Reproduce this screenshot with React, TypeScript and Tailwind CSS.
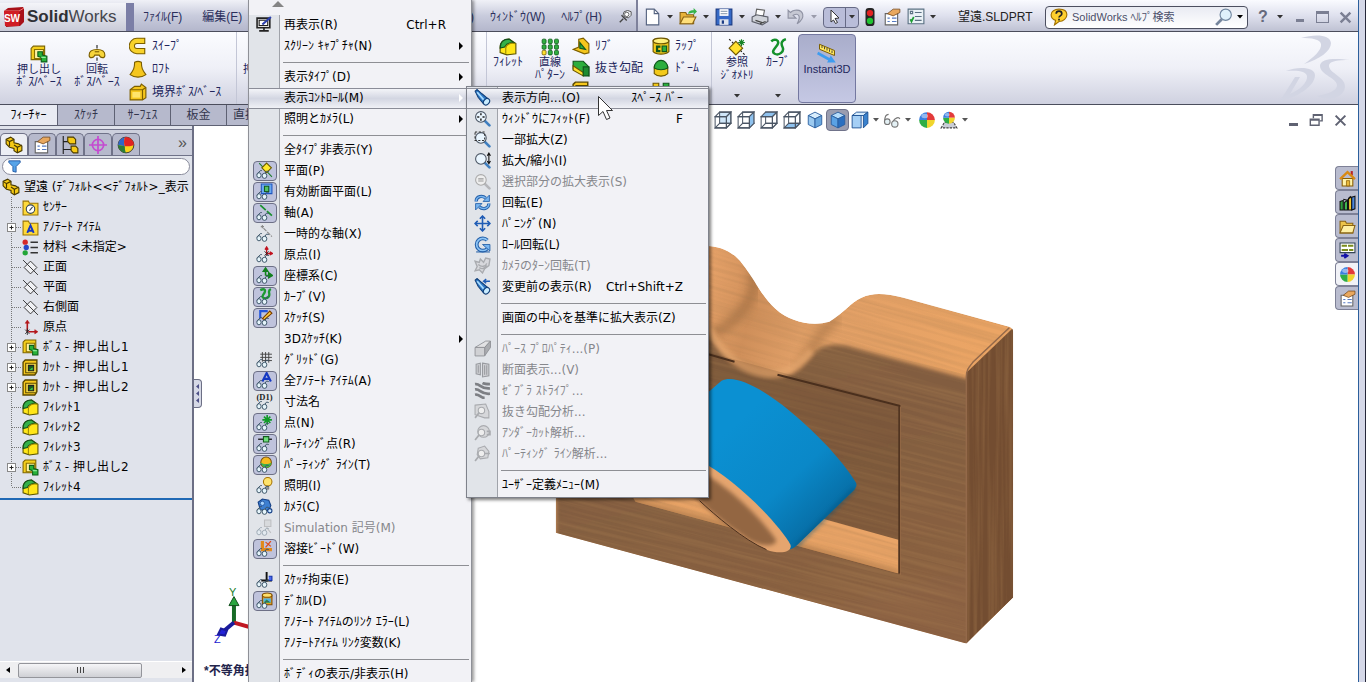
import type { ReactNode } from "react";

type IconProps = { children: ReactNode; className?: string };

function Icon({ children, className = "size-[18px]" }: IconProps) {
  return (
    <svg viewBox="0 0 16 16" className={"shrink-0 " + className} aria-hidden="true" fill="none">
      {children}
    </svg>
  );
}

function Caret({ className = "text-[#333]" }: { className?: string }) {
  return (
    <svg viewBox="0 0 6 4" className={"w-[6px] h-[4px] shrink-0 " + className} aria-hidden="true">
      <path d="M0 0h6L3 3.5z" fill="currentColor" />
    </svg>
  );
}

/* ---------- shared drawings ---------- */

const glasses = (
  <g stroke="#3c5568" strokeWidth="0.900" fill="#e6f5fb">
    <path d="M.8 11.500L4 8.200 5.500 8M8 11l2-2.500 2 .5" fill="none" />
    <ellipse cx="2.800" cy="12.500" rx="2" ry="2.400" />
    <ellipse cx="8" cy="13" rx="2.200" ry="2.400" />
  </g>
);

const extrudeIcon = (
  <>
    <path d="M1 3l2-2h10v9l-2 3H1z" fill="#f5cf1d" stroke="#7d6500" />
    <path d="M4 4h8v8H4z" fill="#fff2a0" stroke="#8a7000" />
    <path d="M7 6h4v3l4 1v5h-5v-4l-3-1z" fill="#28b33a" stroke="#0d5c1a" />
    <path d="M10 11h4" stroke="#9af0a5" />
  </>
);
const cutIcon = (
  <>
    <path d="M1 3l2-2h11v11l-2 3H1z" fill="#f8c81c" stroke="#5c4a00" strokeWidth="1.300" />
    <path d="M3.500 4h10v9h-10z" fill="#ffe34d" stroke="#5c4a00" />
    <path d="M6 6h5v5H6z" fill="#155c1e" stroke="#222" />
    <path d="M7 10h3V8z" fill="#48e05e" />
  </>
);
const filletIcon = (
  <>
    <path d="M1 8C1 3 5 1 9 1l6 4v9l-8 1-6-2z" fill="#ffe619" stroke="#5a5300" />
    <path d="M1 9C1 3 5 1 9 1l4 3C8 4 6 6 5 8z" fill="#35b148" stroke="#12501c" />
    <path d="M6 14V9c0-3 4-5 8.500-4" stroke="#a08c00" />
  </>
);
const planeIcon = (
  <g stroke="#333" strokeWidth="0.900">
    <path d="M8 2l6 6-6 6-6-6z" fill="#f0f1f5" />
    <path d="M1 1l14 14" />
  </g>
);
const partIcon = (
  <g fill="#f6ca16" stroke="#4a3b00">
    <path d="M1 3l4-2 3 2v3l4 1 3 2v4l-4 2-3-2v-2L4 10 1 7z" />
    <path d="M1 3l3 2 4-2M4 5v4M8 8l3 2 4-2M11 10v5" />
  </g>
);
const originIcon = (
  <g stroke="#b3161b" strokeWidth="1.500">
    <path d="M5 12V3M6 12h8" />
    <path d="M3 4l2-3 2 3zM12 10l3 2-3 2z" fill="#b3161b" strokeWidth="0.500" />
    <path d="M3 10l4 4M7 10l-4 4M5 9v6" stroke="#222" strokeWidth="0.800" />
  </g>
);
const handPage = (
  <>
    <path d="M2 5h11v10H2z" fill="#fff" stroke="#666" />
    <path d="M4 9h2M4 12h2M8 9h4M8 12h4" stroke="#567ac2" />
    <path d="M4 5l5-4h6v3l-6 3z" fill="#e9a85e" stroke="#75491c" strokeWidth="0.700" />
  </>
);
const ball = (
  <>
    <path d="M8 8V1a7 7 0 0 1 7 7z" fill="#e33a3a" />
    <path d="M8 8h7a7 7 0 0 1-7 7z" fill="#f0d52d" />
    <path d="M8 8v7a7 7 0 0 1-7-7z" fill="#2fae46" />
    <path d="M8 8H1a7 7 0 0 1 7-7z" fill="#3b7fe0" />
    <ellipse cx="6" cy="4.500" rx="3" ry="2" fill="#fff" opacity="0.450" />
  </>
);
const lens = (c: string, f: string, tip: string) => (
  <>
    <path d="M10 10l4.500 4.500" stroke={tip} strokeWidth="2.500" strokeLinecap="round" />
    <circle cx="6.500" cy="6.500" r="5" fill={f} stroke={c} strokeWidth="1" />
  </>
);
const telescope = (
  <g strokeLinejoin="round">
    <path d="M1 2l2-1.500 4.500 4 5.500 4.500-4 5-5-6z" fill="#2f7ac6" stroke="#123f78" />
    <path d="M3 3l6 7" stroke="#a9dcff" strokeWidth="1.600" />
    <ellipse cx="11.800" cy="12" rx="3.300" ry="2.500" fill="#c8ecff" stroke="#123f78" transform="rotate(-48 11.800 12)" />
  </g>
);

/* ---------- menu icons ---------- */

const view: Record<string, ReactNode> = {
  redraw: (
    <>
      <path d="M1 2h12v9H1z" fill="#ddd" stroke="#222" strokeWidth="1.500" />
      <path d="M3 4h8v5H3z" fill="#fff" stroke="#222" />
      <path d="M3 14h9M7.500 11v3" stroke="#222" strokeWidth="1.500" />
      <path d="M6 8l8-7" stroke="#2b3fae" strokeWidth="2" />
    </>
  ),
  plane: (
    <>
      <path d="M3 1l12 13" stroke="#1d7d2a" />
      <path d="M10 1l4.500 4.500L10 10 5.500 5.500z" fill="#ffe92b" stroke="#6b5c00" />
      {glasses}
    </>
  ),
  section: (
    <>
      <path d="M5 1h10v9H5z" fill="#69a8f0" stroke="#1f56c0" />
      <path d="M8 3h4v5H8z" fill="#53c367" stroke="#155c1e" />
      {glasses}
    </>
  ),
  axis: (
    <>
      <path d="M4 1l11 10" stroke="#1b9130" strokeWidth="1.600" strokeDasharray="7 1.500" />
      {glasses}
    </>
  ),
  tempAxis: (
    <>
      <path d="M6 0v3M4.500 1.500h3M7 3l8 8" stroke="#888" strokeDasharray="4 1" />
      {glasses}
    </>
  ),
  origin: (
    <>
      <path d="M10 9V2M10 7h5M8.500 3.500L10 1l1.500 2.500M13 5.500l2.500 1.500-2.500 1.500" stroke="#c1121f" strokeWidth="1.300" />
      <path d="M8 5l4 4M12 5L8 9" stroke="#222" strokeWidth="0.800" />
      {glasses}
    </>
  ),
  coord: (
    <>
      <path d="M9 8V2M9 8h5M7 4l2-3 2 3zM12 5.500L15.500 8 12 10z" stroke="#12801f" strokeWidth="1.500" fill="#1aa52c" />
      {glasses}
    </>
  ),
  curve: (
    <>
      <path d="M4 2c4-2 6 0 3 4s3 5 5 2-2-5 2-7" stroke="#1d9a32" strokeWidth="2.200" />
      {glasses}
    </>
  ),
  sketch: (
    <>
      <path d="M4 9V2h7" stroke="#2255dd" strokeWidth="2" />
      <path d="M6 9l7-7 2 2-7 6z" fill="#ffcf3c" stroke="#7a3c00" />
      {glasses}
    </>
  ),
  grid: (
    <>
      <path d="M4 3h11M4 6h11M6 9h9M6 1v9M9 1v10M12 1v10" stroke="#444" strokeWidth="0.900" />
      {glasses}
    </>
  ),
  anno: (
    <>
      <path d="M6 9l4-8 4 8M7.500 6.500h5" stroke="#1539c2" strokeWidth="2" />
      {glasses}
    </>
  ),
  dim: (
    <>
      <text x="8" y="7" fontSize="8" textAnchor="middle" fontFamily="Liberation Serif" fontWeight="bold" fill="#222">
        (D1)
      </text>
      {glasses}
    </>
  ),
  point: (
    <>
      <path d="M10.500 1v9M6 5.500h9M7.500 2.500l6 6M13.500 2.500l-6 6" stroke="#0f9b26" strokeWidth="1.500" />
      {glasses}
    </>
  ),
  route: (
    <>
      <path d="M2 4h13" stroke="#222" strokeWidth="1.300" />
      <path d="M7 1.500h5v5H7z" fill="#6fe07d" stroke="#145c1d" />
      {glasses}
    </>
  ),
  parting: (
    <>
      <circle cx="9.500" cy="6" r="5" fill="#f6ba1f" stroke="#79510a" />
      <path d="M4.500 6c3 2 7 2 10 0-.5 4-3 5-5 5s-4.500-2-5-5z" fill="#3fb348" />
      {glasses}
    </>
  ),
  light: (
    <>
      <circle cx="11" cy="4.500" r="4" fill="#ffe36b" stroke="#a87400" />
      <path d="M10 9h2v2.500h-2z" fill="#999" stroke="#555" strokeWidth="0.500" />
      {glasses}
    </>
  ),
  camera: (
    <>
      <path d="M2 4l4-3 6 1 2 5-2 5-8-1z" fill="#3d7fd0" stroke="#143f86" />
      <circle cx="6" cy="5" r="2" fill="#a5d4ff" stroke="#143f86" strokeWidth="0.600" />
      {glasses}
      <circle cx="13" cy="12" r="2" fill="#cbe8ff" stroke="#143f86" />
    </>
  ),
  sim: (
    <g opacity="0.400">
      <path d="M8 1h6v6H8zM10 8l4 5" stroke="#888" fill="#ccc" />
      {glasses}
    </g>
  ),
  weld: (
    <>
      <path d="M6 1v8h9" stroke="#e08a1c" strokeWidth="3" />
      <path d="M9 7l5-6M9 2l5 4" stroke="#e04c16" strokeWidth="1.200" />
      {glasses}
    </>
  ),
  relation: (
    <>
      <path d="M10 1v9M5 9h10" stroke="#111" strokeWidth="1.800" />
      <path d="M12 5h3v4h-3" fill="#4a69f0" stroke="#1331a8" />
      {glasses}
    </>
  ),
  decal: (
    <>
      <path d="M6 3v9h9V3z" fill="#e8a023" stroke="#804d00" />
      <ellipse cx="10.500" cy="3" rx="4.500" ry="2" fill="#ffe06b" stroke="#804d00" />
      <path d="M7 6h7v4H7z" fill="#4fb0e8" />
      <path d="M7 10l3-3 4 3z" fill="#2c9b40" />
      {glasses}
    </>
  ),
};

const sub: Record<string, ReactNode> = {
  orient: telescope,
  fit: (
    <>
      {lens("#4b5563", "#eaf6ff", "#3f7fc0")}
      <path d="M6.500 3v2M6.500 8v2M3 6.500h2M8 6.500h2" stroke="#222" strokeWidth="1.400" />
    </>
  ),
  area: (
    <>
      {lens("#4b5563", "#eaf6ff", "#3f7fc0")}
      <path d="M1 1h9v8H1z" stroke="#333" strokeDasharray="2 1.500" />
    </>
  ),
  zoom: (
    <>
      {lens("#4b5563", "#eaf6ff", "#3f7fc0")}
      <path d="M14 2v8M12.500 3.500L14 1l1.500 2.500M12.500 8.500L14 11l1.500-2.500" stroke="#111" />
    </>
  ),
  sel: (
    <>
      {lens("#aaa", "#eee", "#b5b6ba")}
      <path d="M4 5.500h5M4 7.500h5" stroke="#999" />
    </>
  ),
  rotate: (
    <g>
      <path d="M2 7c0-5 6-6 9-3M14 9c0 5-6 6-9 3" stroke="#245fa8" strokeWidth="3" />
      <path d="M2 7c0-5 6-6 9-3M14 9c0 5-6 6-9 3" stroke="#78b5f0" strokeWidth="1.400" />
      <path d="M14.500 1v6H8.500zM1.500 15V9h6z" fill="#78b5f0" stroke="#245fa8" strokeWidth="0.800" />
    </g>
  ),
  pan: (
    <g stroke="#1f5cb5" strokeWidth="1.500">
      <path d="M8 1.500v13M1.500 8h13" />
      <path d="M5.500 3.500L8 1l2.500 2.500M5.500 12.500L8 15l2.500-2.500M3.500 5.500L1 8l2.500 2.500M12.500 5.500L15 8l-2.500 2.500" />
    </g>
  ),
  roll: (
    <>
      <path d="M12.500 4a5.800 5.800 0 1 0 0 8" stroke="#245fa8" strokeWidth="3.600" />
      <path d="M12.500 4a5.800 5.800 0 1 0 0 8" stroke="#8cc4f5" strokeWidth="1.600" />
      <path d="M8 8h7v6z" fill="#78b5f0" stroke="#245fa8" strokeWidth="0.800" />
      <path d="M2 15h13" stroke="#245fa8" />
    </>
  ),
  turn: (
    <g stroke="#a9abaf" strokeWidth="1.300">
      <path d="M1 4l4 1 1-3 3 3 2-4 4 1-1 6-4 3-2 4-3-3-4 1 2-4z" fill="#d7d8dc" />
      <path d="M4 7c3 3 7 2 8-1M5 10c3 2 5 1 7-2" />
    </g>
  ),
  prev: (
    <>
      {telescope}
      <path d="M15 3H9M11.500 1L9 3l2.500 2" stroke="#1f5cb5" strokeWidth="1.300" />
    </>
  ),
  persp: (
    <g stroke="#8d8f93" strokeWidth="0.800">
      <path d="M1 7l10-6h4.500L10 7z" fill="#e2e2e4" />
      <path d="M10 7l5.500-6v6L10 15z" fill="#aaacb0" />
      <path d="M1 7h9v8H1z" fill="#d0d1d4" />
    </g>
  ),
  sect: (
    <g stroke="#999ba0">
      <path d="M2 3l4-1v11l-4-1zM8 2l6 1v11l-6 1z" fill="#cfd0d4" />
      <path d="M4 4v7M10 4v9M12 4v9" />
    </g>
  ),
  zebra: (
    <g stroke="#7d7f84" strokeWidth="2.600">
      <path d="M1 2c5-1 5 5 14 4M1 7c5-1 5 5 14 4M1 12c4-1 5 3 9 3M8 1c2 1 4 1 7 1" />
    </g>
  ),
  draft: (
    <g stroke="#a9abaf">
      <path d="M1 2l10-1 3 7v6h-4L1 11z" fill="#d6d7da" />
      <circle cx="7" cy="7" r="3" fill="#eee" />
      <path d="M5 9l-4 5" strokeWidth="1.600" />
    </g>
  ),
  under: (
    <g stroke="#a9abaf">
      <circle cx="9" cy="7" r="5.500" fill="#d6d7da" />
      <circle cx="7" cy="8" r="3" fill="#eee" />
      <path d="M5 10l-4 5M12 7h3v3h-3" strokeWidth="1.600" />
    </g>
  ),
  part: (
    <g stroke="#a9abaf">
      <path d="M4 3l6-2 4 5-1 6-7 1-3-4z" fill="#d6d7da" />
      <circle cx="7" cy="8" r="3" fill="#eee" />
      <path d="M5 10l-4 5M10 8h5" strokeWidth="1.600" />
    </g>
  ),
};

/* ---------- menus ---------- */

type Entry =
  | "-"
  | {
      t: string;
      icon?: ReactNode;
      on?: boolean;
      key2?: string;
      more?: boolean;
      off?: boolean;
      hot?: boolean;
    };

const viewMenu: Entry[] = [
  { t: "再表示(R)", icon: view.redraw, key2: "Ctrl+R" },
  { t: "ｽｸﾘｰﾝ ｷｬﾌﾟﾁｬ(N)", more: true },
  "-",
  { t: "表示ﾀｲﾌﾟ(D)", more: true },
  { t: "表示ｺﾝﾄﾛｰﾙ(M)", more: true, hot: true },
  { t: "照明とｶﾒﾗ(L)", more: true },
  "-",
  { t: "全ﾀｲﾌﾟ非表示(Y)" },
  { t: "平面(P)", icon: view.plane, on: true },
  { t: "有効断面平面(L)", icon: view.section, on: true },
  { t: "軸(A)", icon: view.axis, on: true },
  { t: "一時的な軸(X)", icon: view.tempAxis },
  { t: "原点(I)", icon: view.origin },
  { t: "座標系(C)", icon: view.coord, on: true },
  { t: "ｶｰﾌﾞ(V)", icon: view.curve, on: true },
  { t: "ｽｹｯﾁ(S)", icon: view.sketch, on: true },
  { t: "3Dｽｹｯﾁ(K)", more: true },
  { t: "ｸﾞﾘｯﾄﾞ(G)", icon: view.grid },
  { t: "全ｱﾉﾃｰﾄ ｱｲﾃﾑ(A)", icon: view.anno, on: true },
  { t: "寸法名", icon: view.dim },
  { t: "点(N)", icon: view.point, on: true },
  { t: "ﾙｰﾃｨﾝｸﾞ点(R)", icon: view.route, on: true },
  { t: "ﾊﾟｰﾃｨﾝｸﾞ ﾗｲﾝ(T)", icon: view.parting, on: true },
  { t: "照明(I)", icon: view.light },
  { t: "ｶﾒﾗ(C)", icon: view.camera },
  { t: "Simulation 記号(M)", icon: view.sim, off: true },
  { t: "溶接ﾋﾞｰﾄﾞ(W)", icon: view.weld, on: true },
  "-",
  { t: "ｽｹｯﾁ拘束(E)", icon: view.relation },
  { t: "ﾃﾞｶﾙ(D)", icon: view.decal, on: true },
  { t: "ｱﾉﾃｰﾄ ｱｲﾃﾑのﾘﾝｸ ｴﾗｰ(L)" },
  { t: "ｱﾉﾃｰﾄｱｲﾃﾑ ﾘﾝｸ変数(K)" },
  "-",
  { t: "ﾎﾞﾃﾞｨの表示/非表示(H)" },
];

const modifyMenu: Entry[] = [
  { t: "表示方向...(O)", icon: sub.orient, key2: "ｽﾍﾟｰｽ ﾊﾞｰ", hot: true },
  { t: "ｳｨﾝﾄﾞｳにﾌｨｯﾄ(F)", icon: sub.fit, key2: "F" },
  { t: "一部拡大(Z)", icon: sub.area },
  { t: "拡大/縮小(I)", icon: sub.zoom },
  { t: "選択部分の拡大表示(S)", icon: sub.sel, off: true },
  { t: "回転(E)", icon: sub.rotate },
  { t: "ﾊﾟﾆﾝｸﾞ(N)", icon: sub.pan },
  { t: "ﾛｰﾙ回転(L)", icon: sub.roll },
  { t: "ｶﾒﾗのﾀｰﾝ回転(T)", icon: sub.turn, off: true },
  { t: "変更前の表示(R)", icon: sub.prev, key2: "Ctrl+Shift+Z" },
  "-",
  { t: "画面の中心を基準に拡大表示(Z)" },
  "-",
  { t: "ﾊﾟｰｽ ﾌﾟﾛﾊﾟﾃｨ...(P)", icon: sub.persp, off: true },
  { t: "断面表示...(V)", icon: sub.sect, off: true },
  { t: "ｾﾞﾌﾞﾗ ｽﾄﾗｲﾌﾟ...", icon: sub.zebra, off: true },
  { t: "抜き勾配分析...", icon: sub.draft, off: true },
  { t: "ｱﾝﾀﾞｰｶｯﾄ解析...", icon: sub.under, off: true },
  { t: "ﾊﾟｰﾃｨﾝｸﾞ ﾗｲﾝ解析...", icon: sub.part, off: true },
  "-",
  { t: "ﾕｰｻﾞｰ定義ﾒﾆｭｰ(M)" },
];

function MenuRows({ entries }: { entries: Entry[] }) {
  return (
    <>
      {entries.map((e, i) =>
        e === "-" ? (
          <div key={i} role="separator" className="h-[10px] shrink-0 pl-[34px] pr-[2px] pt-[5px]">
            <div className="h-px bg-[#8e8f94]" />
          </div>
        ) : (
          <button
            key={i}
            role="menuitem"
            disabled={e.off}
            className={
              "flex h-[21px] w-full shrink-0 items-center pb-[2px] text-left " +
              (e.off ? "text-[#86878c] " : "text-black ") +
              (e.hot ? "border-y border-[#8b8d98] bg-linear-to-b from-[#f3f4f8] via-[#d3d6e2] to-[#f0f1f6]" : "")
            }
          >
            <span className="flex w-[31px] shrink-0 items-center justify-center">
              {e.icon && (
                <span
                  className={
                    "flex h-5 w-6 items-center justify-center rounded-[4px] " +
                    (e.on ? "border border-[#6d7086] bg-[#bfc3dc]" : "")
                  }
                >
                  <Icon className="size-[17px]">{e.icon}</Icon>
                </span>
              )}
            </span>
            <span className="flex-1 pl-1 whitespace-nowrap">{e.t}</span>
            {e.key2 && <span className="pr-[25px] whitespace-nowrap">{e.key2}</span>}
            {e.more && (
              <svg viewBox="0 0 4 8" className="mr-2 h-2 w-1" aria-hidden="true">
                <path d="M0 0l4 4-4 4z" fill={e.hot ? "#fff" : "#000"} />
              </svg>
            )}
          </button>
        ),
      )}
    </>
  );
}

/* ---------- title bar ---------- */

function ToolCell({ label, children, dim }: { label: string; children: ReactNode; dim?: boolean }) {
  return (
    <button aria-label={label} className="flex w-9 shrink-0 items-center gap-[6px]">
      <Icon>{children}</Icon>
      <Caret className={dim ? "text-[#9a9cab]" : "text-[#333]"} />
    </button>
  );
}

function TitleBar() {
  return (
    <header className="flex h-8 shrink-0 border-b border-[#4b4d5c] bg-linear-to-b from-[#fafbff] via-[#dfe1ee] to-[#bfc2d3] text-[12px] text-[#2b2f5c]">
      <div className="flex w-[638px] shrink-0 items-center border-r-2 border-[#7e819b] bg-linear-to-b from-[#f0f1f7] via-[#c9ccdd] to-[#b4b7cc] pt-[3px]">
        <div className="flex h-full w-[126px] shrink-0 items-center gap-[3px] bg-linear-to-b from-[#f4f5f9] to-[#c9cbd8] pl-1">
          <svg viewBox="0 0 20 20" className="size-5" aria-hidden="true">
            <path d="M0 4l4-3 15-1 1 2v13l-4 4-14 1z" fill="#a81018" />
            <path d="M0 4l15 0 5-3" stroke="#f07a7a" fill="none" />
            <path d="M0 4h15v15H1z" fill="#d01c24" />
            <text x="8" y="15" fontSize="10" fontWeight="bold" textAnchor="middle" fill="#fff" fontFamily="Liberation Sans">
              SW
            </text>
          </svg>
          <span className="text-[17px] leading-5 text-[#45464d]">
            <b className="text-[#2f3035]">Solid</b>Works
          </span>
        </div>
        <div className="h-full w-2 shrink-0 bg-[#7b7ea6]" />
        <nav className="flex flex-1 items-center justify-between pl-[9px] pr-1">
          <div className="flex gap-5">
            <a href="#file">ﾌｧｲﾙ(F)</a>
            <a href="#edit">編集(E)</a>
          </div>
          <div className="flex items-center gap-4">
            <a href="#tools">ﾂｰﾙ(T)</a>
            <a href="#window">ｳｨﾝﾄﾞｳ(W)</a>
            <a href="#help">ﾍﾙﾌﾟ(H)</a>
            <Icon className="size-[14px]">
              <path d="M8 8l4 1 3-3V2l-4-1.500L7 2 6 5z" fill="#f4f5fa" stroke="#444" />
              <ellipse cx="10" cy="5" rx="2.500" ry="2.500" fill="#fff" stroke="#555" />
              <path d="M6 10l-4 4M4 6l6 6" stroke="#444" strokeWidth="1.600" />
            </Icon>
          </div>
        </nav>
      </div>
      <div className="flex flex-1 items-center pt-[3px] pl-[5px]">
        <ToolCell label="新規">
          <path d="M3 1h7l4 4v10H3z" fill="#fff" stroke="#54627f" />
          <path d="M10 1v4h4" stroke="#54627f" />
        </ToolCell>
        <ToolCell label="開く">
          <path d="M1 4h5l1 2h6v8H1z" fill="#e8b33a" stroke="#8a6414" />
          <path d="M4 8h11l-3 6H1z" fill="#ffdf7a" stroke="#8a6414" />
          <path d="M8 5c1-3 3-3 5-3V0l3 3-3 3V4" fill="#35b34a" />
        </ToolCell>
        <ToolCell label="保存">
          <path d="M1 1h14v14H1z" fill="#3569c6" stroke="#1c3d85" />
          <path d="M4 1h8v6H4z" fill="#fff" />
          <path d="M5 3h6M5 5h6" stroke="#9ab" />
          <path d="M4 10h8v5H4z" fill="#dfe4ee" />
          <path d="M6 11h2v3H6z" fill="#1c3d85" />
        </ToolCell>
        <ToolCell label="印刷">
          <path d="M4 7l1-6 7 1-1 5z" fill="#fff" stroke="#666" />
          <path d="M1 8l4-2 10 2v4l-5 3-9-3z" fill="#cfd2d9" stroke="#5b5e68" />
          <path d="M4 11l6 2M8 14l5-2" stroke="#444" />
        </ToolCell>
        <ToolCell label="元に戻す" dim>
          <path d="M1 2v7h7L5.500 6.500C10 4 13 7 9 14c8-5 6-13-2-12-2 .3-3 1-4 2z" fill="#c6c8d3" stroke="#8f92a3" />
        </ToolCell>
        <div className="flex h-[21px] w-9 shrink-0 items-center rounded-[4px] border border-[#666a85] bg-[#b9bdd9]">
          <button aria-label="選択" className="flex h-full w-[22px] items-center justify-center border-r border-[#666a85]">
            <Icon className="size-4">
              <path d="M4 1l8 8-4 .5 2.500 4-2 1L6.500 11 4 13z" fill="#fff" stroke="#333" />
            </Icon>
          </button>
          <button aria-label="選択オプション" className="flex flex-1 justify-center">
            <Caret />
          </button>
        </div>
        <button aria-label="再構築" className="ml-[2px] w-[22px]">
          <Icon>
            <rect x="4" y="0" width="8" height="16" rx="3" fill="#252525" />
            <circle cx="8" cy="4.500" r="2.800" fill="#e32222" />
            <circle cx="8" cy="11.500" r="2.800" fill="#21c431" />
          </Icon>
        </button>
        <button aria-label="プロパティ" className="w-6">
          <Icon>{handPage}</Icon>
        </button>
        <button aria-label="オプション" className="flex items-center gap-[5px]">
          <Icon>
            <path d="M1 1h14v13H1z" fill="#eaf1f6" stroke="#5b7183" />
            <path d="M7 4h6M7 7.500h6M7 11h6M3 3h2v2H3z" stroke="#5b7183" />
            <path d="M3 10l1 2 2-4" stroke="#1e9e33" strokeWidth="1.500" />
          </Icon>
          <Caret />
        </button>
        <h1 className="ml-[22px] whitespace-nowrap text-[#222]">望遠.SLDPRT</h1>
        <label className="ml-auto flex h-[23px] w-[203px] shrink-0 items-center gap-1 rounded-[4px] border border-[#4c4f60] bg-linear-to-b from-[#e9ebf3] to-white px-1">
          <Icon>
            <path d="M8 1c5 0 7 2 7 5s-3 6-7 6l-4 3 1-4C2 10 1 8 1 6c0-3 3-5 7-5z" fill="#ffd02e" stroke="#a07000" />
            <path d="M5.500 5c0-3 5-3 5 0 0 2-2.500 2-2.500 3.500M8 9.500v1.500" stroke="#222" strokeWidth="1.500" />
          </Icon>
          <input
            aria-label="ヘルプ検索"
            placeholder="SolidWorks ﾍﾙﾌﾟ検索"
            className="w-0 flex-1 bg-transparent text-[11px] outline-none placeholder:text-[#4b4f6a]"
          />
          <Icon>
            <path d="M6 10l-5 5" stroke="#75859c" strokeWidth="2.500" />
            <circle cx="9.500" cy="6" r="5" fill="#dff1fb" stroke="#70869f" />
          </Icon>
          <Caret className="text-black" />
        </label>
        <div className="flex shrink-0 items-center pl-[9px] text-[#666a7d]">
          <button aria-label="ヘルプ" className="flex w-9 items-center gap-2">
            <span className="w-3 text-center text-[16px] leading-5 font-bold">?</span>
            <Caret />
          </button>
          <button aria-label="最小化" className="w-[23px] pl-[3px]">
            <span className="mt-[6px] block h-[3px] w-2 bg-[#7b7f93]" />
          </button>
          <button aria-label="最大化" className="w-[23px]">
            <span className="block h-3 w-[13px] border border-t-[3px] border-[#7b7f93]" />
          </button>
          <button aria-label="閉じる" className="w-[19px]">
            <Icon className="size-[13px]">
              <path d="M2 2l12 12M14 2L2 14" stroke="#7b7f93" strokeWidth="3" />
            </Icon>
          </button>
        </div>
      </div>
    </header>
  );
}

/* ---------- ribbon ---------- */

type Line = { t: string; kana?: boolean };

function Big({ icon, lines, className, drop }: { icon: ReactNode; lines: Line[]; className: string; drop?: boolean }) {
  return (
    <button className={"flex shrink-0 flex-col items-center leading-[13px] whitespace-nowrap " + className}>
      <Icon>{icon}</Icon>
      {lines.map((l) => (
        <span key={l.t} className={l.kana ? "text-[12px]" : "text-[11px]"}>
          {l.t}
        </span>
      ))}
      {drop && (
        <span className="mt-auto mb-[6px]">
          <Caret />
        </span>
      )}
    </button>
  );
}

function Small({ icon, label }: { icon: ReactNode; label?: string }) {
  return (
    <button className="flex h-[22px] items-center gap-[5px] whitespace-nowrap">
      <Icon>{icon}</Icon>
      {label}
    </button>
  );
}

const Rule = () => <div className="w-px shrink-0 bg-[#c3c6d6]" />;

const wrapIcon = (
  <>
    <path d="M1 3v10c3 3 11 3 14 0V3z" fill="#f3c91a" stroke="#6d5600" />
    <ellipse cx="8" cy="3.500" rx="7" ry="2.500" fill="#fff07b" stroke="#6d5600" />
    <path d="M4 8h3v1H5v3h2v1H4zM9 8h4v5H9z" fill="#2cae3d" stroke="#10561c" />
  </>
);
const mirrorIcon = (
  <>
    <path d="M1 2h5v8H1z" fill="#f3c91a" stroke="#6d5600" />
    <path d="M10 2h5v8h-5z" fill="#2cae3d" stroke="#10561c" />
  </>
);

function Ribbon() {
  return (
    <section className="flex h-[73px] shrink-0 border-b border-[#4b4d5c] bg-linear-to-b from-[#fbfcff] via-[#eff0f7] to-[#cfd1e0] text-[12px] text-[#22265c]">
      <Big
        className="ml-[10px] w-[58px] pt-[13px]"
        icon={extrudeIcon}
        lines={[{ t: "押し出し" }, { t: "ﾎﾞｽ/ﾍﾞｰｽ", kana: true }]}
      />
      <Big
        className="w-[58px] pt-[13px]"
        icon={
          <>
            <path d="M8 0v4M8 11v5" stroke="#222" strokeDasharray="3 1.500" />
            <path d="M1 9c0-4 3-5 7-5s7 1 7 5c0 3-4 3-5 0H6c-1 3-5 3-5 0z" fill="#f7d53a" stroke="#7c5f00" />
            <path d="M6 6h4" stroke="#7c5f00" />
          </>
        }
        lines={[{ t: "回転" }, { t: "ﾎﾞｽ/ﾍﾞｰｽ", kana: true }]}
      />
      <div className="flex w-[110px] shrink-0 flex-col gap-[1px] pt-[3px] pl-[3px]">
        <Small
          label="ｽｲｰﾌﾟ"
          icon={
            <>
              <path d="M14.500 3.500H7a4.500 4.500 0 0 0 0 9h7.500" stroke="#7c5f00" strokeWidth="5.500" />
              <path d="M13.500 3.500H7a4.500 4.500 0 0 0 0 9h6.500" stroke="#f8d22b" strokeWidth="3.800" />
            </>
          }
        />
        <Small
          label="ﾛﾌﾄ"
          icon={<path d="M5 2c2-1 4-1 6 0 0 5 1 7 4 11-4 3-10 3-14 0 3-4 4-6 4-11z" fill="#f5c61d" stroke="#7c5f00" />}
        />
        <Small
          label="境界ﾎﾞｽ/ﾍﾞｰｽ"
          icon={
            <>
              <path d="M1 6l4-3h5l1-2 4 3v9l-3 2H1z" fill="#f5c61d" stroke="#7c5f00" />
              <path d="M1 6h11v9M12 6l3-2" stroke="#7c5f00" />
              <path d="M3 8h7v5H3z" fill="#ffe56b" />
            </>
          }
        />
      </div>
      <Rule />
      <Big className="w-[249px] items-start pt-[13px] pl-[6px]" icon={<g />} lines={[{ t: "押し出し" }]} />
      <Rule />
      <Big className="w-[42px] pt-[6px]" icon={filletIcon} lines={[{ t: "ﾌｨﾚｯﾄ", kana: true }]} />
      <Big
        className="w-[42px] pt-[6px]"
        icon={
          <>
            <g fill="#2fae3f" stroke="#0c5517" strokeWidth="0.700">
              <rect x="1" y="1" width="3.500" height="4" rx="1" />
              <rect x="6.500" y="1" width="3.500" height="4" rx="1" />
              <rect x="12" y="1" width="3.500" height="4" rx="1" />
              <rect x="1" y="6" width="3.500" height="4" rx="1" />
              <rect x="6.500" y="6" width="3.500" height="4" rx="1" />
              <rect x="12" y="6" width="3.500" height="4" rx="1" />
              <rect x="6.500" y="11" width="3.500" height="4" rx="1" />
              <rect x="12" y="11" width="3.500" height="4" rx="1" />
            </g>
            <rect x="1" y="11" width="3.500" height="4" rx="1" fill="#ffe02e" stroke="#6d5600" strokeWidth="0.700" />
          </>
        }
        lines={[{ t: "直線" }, { t: "ﾊﾟﾀｰﾝ", kana: true }]}
      />
      <div className="flex w-20 shrink-0 flex-col pt-[3px] pl-[1px]">
        <Small
          label="ﾘﾌﾞ"
          icon={
            <>
              <path d="M6 2l4-1 5 5v8l-4 1-10-4 5-2z" fill="#f5c61d" stroke="#7c5f00" />
              <path d="M7 10V5l5 6z" fill="#2cae3d" stroke="#10561c" />
            </>
          }
        />
        <Small
          label="抜き勾配"
          icon={
            <>
              <path d="M1 2l9 0 5 5v8l-5-3-9-3z" fill="#2cae3d" stroke="#10561c" />
              <path d="M1 6l9 6v3L1 10z" fill="#ffe02e" stroke="#6d5600" />
              <path d="M10 7h5v8h-5z" fill="#1d8b30" stroke="#10561c" />
            </>
          }
        />
        <Small icon={cutIcon} />
      </div>
      <div className="flex w-[60px] shrink-0 flex-col pt-[3px] pl-[1px]">
        <Small label="ﾗｯﾌﾟ" icon={wrapIcon} />
        <Small
          label="ﾄﾞｰﾑ"
          icon={
            <>
              <path d="M2 7v6c3 3 9 3 12 0V7z" fill="#f3c91a" stroke="#6d5600" />
              <path d="M2 8c0-9 12-9 12 0-3 2-9 2-12 0z" fill="#2cae3d" stroke="#10561c" />
            </>
          }
        />
        <Small icon={mirrorIcon} />
      </div>
      <Rule />
      <Big
        className="w-[50px] pt-[6px]"
        drop
        icon={
          <>
            <path d="M1 1l14 14" stroke="#222" strokeDasharray="2 1.500" />
            <path d="M7 3l6 6-6 6-6-6z" fill="#ffe02e" stroke="#6d5600" />
            <path d="M12 1v6M9 4h6M10 2l4 4M14 2l-4 4" stroke="#168327" />
          </>
        }
        lines={[{ t: "参照" }, { t: "ｼﾞｵﾒﾄﾘ" }]}
      />
      <Big
        className="w-8 pt-[6px]"
        drop
        icon={
          <path
            d="M2 3c3-3 7-1 6 2S1 12 5 14s9-2 7-6 0-6 3-7"
            stroke="#14912b"
            strokeWidth="2.200"
          />
        }
        lines={[{ t: "ｶｰﾌﾞ", kana: true }]}
      />
      <button
        aria-pressed="true"
        className="mt-[2px] mb-px ml-1 flex w-[58px] shrink-0 flex-col items-center rounded-[4px] border border-[#7478a0] bg-linear-to-b from-[#a9adcb] to-[#c5c8e4] pt-2 text-[11px] leading-3"
      >
        <Icon className="size-5">
          <path d="M2 1l12 5v4L2 5z" fill="#ffe65c" stroke="#7c5f00" strokeWidth="0.800" />
          <path d="M4 2v2M6 3v2M8 4v2M10 5v2M12 6v2" stroke="#333" strokeWidth="0.700" />
          <path d="M1 7l9 5 1-2 4 5.500-7 0 1-1.500L0 9z" fill="#3e9cf0" />
        </Icon>
        Instant3D
      </button>
      <svg viewBox="0 0 76 70" className="ml-auto mr-1 h-[70px] w-[76px]" aria-hidden="true">
        <g fill="#d2d5e3">
          <path d="M23 6C36 2 52 2 53 11 53 19 42 27 26 32 36 25 44 18 43 12 42 7 34 6 23 6z" />
          <path d="M8 39C20 34 37 35 37 43 37 54 20 65 2 69L17 45 22 45 12 62C22 58 30 50 29 44 28 39 20 38 8 39z" />
          <path d="M72 28C58 26 42 26 42 34 42 43 60 46 59 54 58 59 50 62 39 64 50 70 66 66 67 55 68 45 50 41 51 33 52 29 60 28 72 28z" />
        </g>
      </svg>
    </section>
  );
}

/* ---------- tabs and heads-up bar ---------- */

function Cube({ f, r, t, l, b }: { f?: string; r?: string; t?: string; l?: string; b?: string }) {
  return (
    <Icon>
      <g stroke="#4a5564" strokeWidth="0.900">
        <path d="M5 1h10v10H5z" fill={l ?? "#fff"} />
        <path d="M1 15l4-4h10l-4 4z" fill={b ?? "none"} />
        <path d="M1 5l4-4h10l-4 4z" fill={t ?? "none"} />
        <path d="M11 5l4-4v10l-4 4z" fill={r ?? "none"} />
        <path d="M1 5h10v10H1z" fill={f ?? "none"} />
      </g>
    </Icon>
  );
}

function SolidCube({ dark }: { dark?: boolean }) {
  return (
    <Icon>
      <g stroke="#2a5f9f" strokeWidth="0.800">
        <path d="M2 4l6-3 6 3-6 3z" fill={dark ? "#b5dcfa" : "#d8edfc"} />
        <path d="M2 4l6 3v8l-6-3z" fill={dark ? "#5aa2e4" : "#9ccaf0"} />
        <path d="M14 4L8 7v8l6-3z" fill={dark ? "#2a6fc0" : "#6aa7de"} />
      </g>
    </Icon>
  );
}

function HeadsUp() {
  const cell = "flex w-[23px] shrink-0 items-center justify-center";
  return (
    <div className="flex h-[30px] flex-1 items-center">
      <button aria-label="左側面" className={cell}>
        <Cube l="#cfe6f9" />
      </button>
      <button aria-label="右側面" className={cell}>
        <Cube r="#8fc2ee" />
      </button>
      <button aria-label="平面" className={cell}>
        <Cube t="#8fc2ee" />
      </button>
      <button aria-label="底面" className={cell}>
        <Cube b="#8fc2ee" />
      </button>
      <button aria-label="等角投影" className={cell}>
        <SolidCube />
      </button>
      <button
        aria-label="シェイディング"
        aria-pressed="true"
        className={cell + " h-[22px] rounded-[4px] border border-[#70738a] bg-[#9a9db0]"}
      >
        <SolidCube dark />
      </button>
      <button aria-label="断面表示" className="flex w-[34px] items-center gap-1 pl-[2px]">
        <Icon>
          <path d="M1 4h8v11H1z" fill="#a5cff5" stroke="#1b4f92" strokeWidth="0.800" />
          <path d="M1 4l4-3h10l-4 3z" fill="#d7ecfd" stroke="#1b4f92" strokeWidth="0.800" />
          <path d="M11 4l4-3v10l-4 4z" fill="#3b82cd" stroke="#1b4f92" strokeWidth="0.800" />
        </Icon>
        <Caret className="text-[#555]" />
      </button>
      <button aria-label="表示アイテム" className="flex w-8 items-center gap-1">
        <Icon>
          <g stroke="#777" fill="#e4f1f5">
            <path d="M1.500 9c0-4 1-6 3.500-6M9 9c2-3 5-4 6-2" fill="none" />
            <circle cx="3.800" cy="9.500" r="2.500" />
            <circle cx="10.500" cy="11.500" r="2.800" />
          </g>
        </Icon>
        <Caret className="text-[#555]" />
      </button>
      <button aria-label="外観" className={cell}>
        <Icon>{ball}</Icon>
      </button>
      <button aria-label="シーン" className="flex items-center gap-1 pl-[2px]">
        <Icon>
          <path d="M1 15l3-5h8l3 5z" fill="#c9cdd6" stroke="#444" strokeDasharray="2 1" />
          <g transform="translate(2 0) scale(.75)">{ball}</g>
        </Icon>
        <Caret className="text-[#555]" />
      </button>
      <div className="ml-auto flex items-center gap-[11px] pr-[11px]">
        <button aria-label="ドキュメントを最小化">
          <span className="mt-2 block h-[3px] w-[9px] bg-[#5f6272]" />
        </button>
        <button aria-label="ドキュメントを元に戻す">
          <Icon className="size-[14px]">
            <path d="M5 6V2h10v7h-3M5 2.500h10" stroke="#5f6272" strokeWidth="1.600" />
            <path d="M1.500 7h10v7h-10zM1.500 8h10" stroke="#5f6272" strokeWidth="1.600" />
          </Icon>
        </button>
        <button aria-label="ドキュメントを閉じる">
          <Icon className="size-[13px]">
            <path d="M2 2l12 12M14 2L2 14" stroke="#5f6272" strokeWidth="2.500" />
          </Icon>
        </button>
      </div>
    </div>
  );
}

function TabBar() {
  const tab = "h-full border-r border-[#5e6173] bg-[#b6b9cc] whitespace-nowrap";
  return (
    <div className="flex h-[21px] shrink-0">
      <div
        role="tablist"
        className="flex w-[470px] shrink-0 border-b border-[#5e6173] bg-[#a6a9bd] text-[12px] leading-5 text-[#33364c]"
      >
        <button
          role="tab"
          aria-selected="true"
          className="h-full w-[58px] border-r border-[#5e6173] bg-[#e9ebf3] text-black"
        >
          ﾌｨｰﾁｬｰ
        </button>
        <button role="tab" className={tab + " w-[57px]"}>
          ｽｹｯﾁ
        </button>
        <button role="tab" className={tab + " w-14"}>
          ｻｰﾌｪｽ
        </button>
        <button role="tab" className={tab + " w-14"}>
          板金
        </button>
        <button role="tab" className={tab + " w-[76px] pl-[6px] text-left"}>
          直接編集
        </button>
      </div>
      <div className="relative z-10 flex h-[30px] flex-1 pl-[241px]">
        <HeadsUp />
      </div>
    </div>
  );
}

/* ---------- feature tree ---------- */

const folder = (inner: ReactNode) => (
  <>
    <path d="M1 2h5l1 2h8v11H1z" fill="#ffda3b" stroke="#9a7400" />
    {inner}
  </>
);

const tree: { t: string; icon: ReactNode; plus?: boolean }[] = [
  {
    t: "ｾﾝｻｰ",
    icon: folder(
      <>
        <circle cx="8" cy="9.500" r="4" fill="#fff" stroke="#345" />
        <path d="M7 11l3-3.500" stroke="#345" />
      </>,
    ),
  },
  {
    t: "ｱﾉﾃｰﾄ ｱｲﾃﾑ",
    icon: folder(<path d="M5 13l3-7 3 7M6 11h4" stroke="#1737c4" strokeWidth="1.800" />),
    plus: true,
  },
  {
    t: "材料 <未指定>",
    icon: (
      <>
        <circle cx="3" cy="3" r="2.500" fill="#d62828" />
        <circle cx="4" cy="8" r="2.500" fill="#2748c8" />
        <circle cx="3" cy="13" r="2.500" fill="#22a537" />
        <path d="M8 3h7M8 8h7M8 13h7" stroke="#333" strokeWidth="1.500" />
      </>
    ),
  },
  { t: "正面", icon: planeIcon },
  { t: "平面", icon: planeIcon },
  { t: "右側面", icon: planeIcon },
  { t: "原点", icon: originIcon },
  { t: "ﾎﾞｽ - 押し出し1", icon: extrudeIcon, plus: true },
  { t: "ｶｯﾄ - 押し出し1", icon: cutIcon, plus: true },
  { t: "ｶｯﾄ - 押し出し2", icon: cutIcon, plus: true },
  { t: "ﾌｨﾚｯﾄ1", icon: filletIcon },
  { t: "ﾌｨﾚｯﾄ2", icon: filletIcon },
  { t: "ﾌｨﾚｯﾄ3", icon: filletIcon },
  { t: "ﾎﾞｽ - 押し出し2", icon: extrudeIcon, plus: true },
  { t: "ﾌｨﾚｯﾄ4", icon: filletIcon },
];

function TreeGuide({ plus, last }: { plus?: boolean; last: boolean }) {
  return (
    <svg viewBox="0 0 16 20" className="h-5 w-4 shrink-0" aria-hidden="true">
      <g stroke="#777" strokeDasharray="1 1">
        <path d={last ? "M5.500 0V10" : "M5.500 0V20"} />
        <path d="M6 10.500H16" />
      </g>
      {plus && (
        <>
          <rect x="1.500" y="6.500" width="8" height="8" fill="#fff" stroke="#888" />
          <path d="M3.500 10.500h4M5.500 8.500v4" stroke="#222" />
        </>
      )}
    </svg>
  );
}

function FeaturePanel() {
  const tab = "flex h-[22px] w-7 items-center justify-center rounded-t-[5px] border border-b-0 border-[#6f7288] ";
  return (
    <aside className="flex w-[194px] shrink-0 flex-col border-r-2 border-[#6c6f85] bg-[#e0e3eb] text-[12px] text-black">
      <div className="mt-[3px] flex h-[27px] shrink-0 items-end border-y border-[#6f7288] bg-[#cdd0dd]">
        <button aria-label="FeatureManager" className={tab + "bg-[#eceef4]"}>
          <Icon>{partIcon}</Icon>
        </button>
        <button aria-label="PropertyManager" className={tab + "bg-[#b6b9cc]"}>
          <Icon>{handPage}</Icon>
        </button>
        <button aria-label="ConfigurationManager" className={tab + "bg-[#b6b9cc]"}>
          <Icon>
            <path d="M2 0v16M2 5h5M2 12h7" stroke="#222" />
            <path d="M6 1h5l2 2v4H8L6 5zM9 9h4l2 2v4h-4l-2-2z" fill="#f6ca16" stroke="#4a3b00" />
          </Icon>
        </button>
        <button aria-label="DimXpertManager" className={tab + "bg-[#b6b9cc]"}>
          <Icon>
            <circle cx="8" cy="8" r="5" stroke="#c44bd0" strokeWidth="1.500" />
            <path d="M8 0v16M0 8h16" stroke="#c44bd0" strokeWidth="1.500" />
          </Icon>
        </button>
        <button aria-label="DisplayManager" className={tab + "bg-[#b6b9cc]"}>
          <Icon>
            <circle cx="8" cy="8" r="7" fill="#f7d41c" stroke="#333" strokeWidth="0.800" />
            <path d="M1 8a7 7 0 0 1 6-7c-1 3-1 5 0 8z" fill="#2f66c8" />
            <path d="M7 1a7 7 0 0 1 8 7c-2 1-5 1.500-8 1-1-3-1-5 0-8z" fill="#e02424" />
            <path d="M1 8l6 1c0 2 0 4 1 6a7 7 0 0 1-7-7z" fill="#2a7d3a" />
          </Icon>
        </button>
        <button aria-label="展開" className="ml-auto pr-[5px] pb-[2px] text-[16px] leading-5 text-[#555]">
          »
        </button>
      </div>
      <label className="mx-[2px] mt-[2px] flex h-[17px] shrink-0 items-center rounded-full border border-[#8a8c9c] bg-white pl-[5px]">
        <Icon className="size-[13px]">
          <path d="M1 1h14v2l-5 5v7l-4-1V8L1 3z" fill="#57a4e8" stroke="#174e9c" />
        </Icon>
        <input aria-label="フィルター" className="w-0 flex-1 bg-transparent outline-none" />
      </label>
      <div className="mt-[2px] overflow-hidden border-b-2 border-[#2069b5] pb-px font-['DejaVu_Sans','Noto_Sans_CJK_JP',sans-serif] leading-5">
        <div className="flex h-5 items-center gap-1 pl-[2px] whitespace-pre">
          <Icon>{partIcon}</Icon>望遠 (ﾃﾞﾌｫﾙﾄ&lt;&lt;ﾃﾞﾌｫﾙﾄ&gt;_表示
        </div>
        <ul>
          {tree.map((n, i) => (
            <li key={i} className="flex h-5 items-center pl-[6px] whitespace-nowrap">
              <TreeGuide plus={n.plus} last={i === tree.length - 1} />
              <Icon className="mr-1 size-[17px]">{n.icon}</Icon>
              {n.t}
            </li>
          ))}
        </ul>
      </div>
      <div className="mt-auto mb-1 flex h-[17px] shrink-0 items-center justify-between border-t border-[#fff] bg-[#efeff1] px-[6px]">
        <svg viewBox="0 0 4 6" className="h-[6px] w-1" aria-hidden="true">
          <path d="M4 0v6L0 3z" />
        </svg>
        <div className="mr-auto ml-2 flex h-[15px] w-[124px] items-center justify-center gap-[2px] rounded-[2px] border border-[#94959b] bg-linear-to-b from-[#f6f6f8] to-[#cfd0d5]">
          <span className="h-[6px] w-px bg-[#444]" />
          <span className="h-[6px] w-px bg-[#444]" />
          <span className="h-[6px] w-px bg-[#444]" />
        </div>
        <svg viewBox="0 0 4 6" className="h-[6px] w-1" aria-hidden="true">
          <path d="M0 0v6l4-3z" />
        </svg>
      </div>
    </aside>
  );
}

/* ---------- model ---------- */

const bodyPath =
  "M556 330L660 262C690 240 725 240 743 264C758 284 762 296 776 309C790 322 812 327 830 322C846 312 850 304 862 298C874 292 888 294 904 298L1010 327C1013 328 1014 330 1014 333V598L967 644L556 533Z";

function Model() {
  return (
    <svg viewBox="194 126 1142 556" preserveAspectRatio="xMinYMin meet" className="h-full w-full" role="img" aria-label="望遠">
      <defs>
        <filter id="grain" x="0" y="0" width="1" height="1">
          <feTurbulence type="fractalNoise" baseFrequency="0.006 0.280" numOctaves="3" seed="4" />
          <feColorMatrix values="0 0 0 0 0.38  0 0 0 0 0.2  0 0 0 0 0.08  0 2 0 0 -0.750" />
        </filter>
        <filter id="soft">
          <feGaussianBlur stdDeviation="4" />
        </filter>
        <filter id="soft2">
          <feGaussianBlur stdDeviation="2" />
        </filter>
        <linearGradient id="front" x1="0" y1="0" x2="0.300" y2="1">
          <stop offset="0" stopColor="#86603f" />
          <stop offset="0.500" stopColor="#825d3f" />
          <stop offset="1" stopColor="#8a6142" />
        </linearGradient>
        <linearGradient id="blue" x1="740" y1="420" x2="828" y2="516" gradientUnits="userSpaceOnUse">
          <stop offset="0" stopColor="#0b90d2" />
          <stop offset="0.600" stopColor="#0a88c8" />
          <stop offset="1" stopColor="#076ea6" />
        </linearGradient>
        <linearGradient id="topf" x1="700" y1="260" x2="980" y2="340" gradientUnits="userSpaceOnUse">
          <stop offset="0" stopColor="#eba66c" />
          <stop offset="0.220" stopColor="#cf8f5a" />
          <stop offset="0.400" stopColor="#e09f67" />
          <stop offset="1" stopColor="#eba565" />
        </linearGradient>
        <clipPath id="body">
          <path d={bodyPath} />
        </clipPath>
        <clipPath id="face">
          <path d="M556 340L700 300C715 350 735 376 776 376C800 374 804 362 814 352C822 344 832 342 845 345L967 375V644L556 533Z" />
        </clipPath>
        <clipPath id="floor">
          <path d="M610 460L827 520L899 540V574L636 502Z" />
        </clipPath>
        <clipPath id="side">
          <path d="M967 373L1014 328V598L967 644Z" />
        </clipPath>
      </defs>
      <g clipPath="url(#body)">
        <path d={bodyPath} fill="url(#topf)" />
        <path d="M752 270C762 296 735 325 712 334" stroke="#8d6038" strokeWidth="10" fill="none" opacity="0.500" filter="url(#soft)" />
        <path d="M838 318C814 335 812 358 795 372" stroke="#8d6038" strokeWidth="10" fill="none" opacity="0.400" filter="url(#soft)" />
        <g transform="rotate(16 800 400)">
          <rect x="500" y="130" width="620" height="330" filter="url(#grain)" opacity="0.280" />
        </g>
        <path
          d="M556 320L700 300C710 346 732 376 772 378C800 378 806 362 816 352C824 345 834 344 847 346L975 381V664L556 553Z"
          fill="url(#front)"
          filter="url(#soft2)"
        />
        <g clipPath="url(#face)">
          <g transform="rotate(14 760 460)">
            <rect x="500" y="230" width="540" height="430" filter="url(#grain)" opacity="0.480" />
          </g>
        </g>
        <path
          d="M704 318C718 352 742 373 772 374C794 373 802 361 812 351"
          stroke="#e6a870"
          strokeWidth="7"
          fill="none"
          opacity="0.700"
          filter="url(#soft2)"
        />
        <path d="M700 350L900 405V575L700 520Z" fill="#5d4228" opacity="0.200" />
        <path d="M700 352L735 362M778 375L900 406V574" stroke="#4a2f1d" strokeWidth="2" fill="none" />
        <path d="M901 407V575" stroke="#b08055" fill="none" opacity="0.600" />
        <g clipPath="url(#floor)">
          <path d="M600 450H910V580H600Z" fill="#e9a467" />
          <path d="M600 496L899 578" stroke="#8d6038" strokeWidth="9" opacity="0.700" filter="url(#soft)" />
          <g transform="rotate(15 760 520)">
            <rect x="600" y="440" width="320" height="120" filter="url(#grain)" opacity="0.350" />
          </g>
        </g>
        <path d="M967 373L1014 328V598L967 644Z" fill="#734d31" />
        <g clipPath="url(#side)">
          <g transform="rotate(90 990 480)">
            <rect x="820" y="440" width="340" height="100" filter="url(#grain)" opacity="0.400" />
          </g>
        </g>
        <path d="M967 644V378C967 370 969 368 974 362L1010 328" stroke="#94694a" strokeWidth="1.500" fill="none" />
      </g>
      <path
        d="M700 400L722 381C735 374 762 388 790 411C820 436 842 460 856 482C858 485 857 487 855 490L797 546C790 552 786 550 780 545L700 470Z"
        fill="url(#blue)"
      />
      <path d="M855 489L796 547" stroke="#064f78" strokeWidth="4" opacity="0.500" filter="url(#soft2)" />
      <path d="M700 461C735 478 780 525 791 545C793 553 780 555 767 550C745 541 715 515 700 501Z" fill="#e5a56f" />
      <path d="M696 470C725 482 762 518 777 541C774 549 757 546 746 538C725 524 708 510 696 498Z" fill="#936643" filter="url(#soft2)" />
      <path d="M700 501C715 515 745 541 767 550" stroke="#4a2f1d" fill="none" />
      <g>
        <path d="M234 624V604" stroke="#176b26" strokeWidth="4" />
        <path d="M229 606L234 597L239 606Z" fill="#2aa53f" stroke="#14501e" />
        <path d="M234 623L262 631" stroke="#c01822" strokeWidth="4" />
        <path d="M234 623L222 633" stroke="#1a1b9c" strokeWidth="4" />
        <path d="M218 635L221 629L227 631L225 636Z" fill="#2222d8" stroke="#1a1b9c" strokeWidth="2" />
      </g>
      <g fontSize="11" fontFamily="Liberation Sans">
        <text x="229" y="596" fill="#1a7d2a">
          Y
        </text>
        <text x="214" y="643" fill="#1c1cd0">
          Z
        </text>
      </g>
    </svg>
  );
}

const paneTabs: { n: string; icon: ReactNode }[] = [
  {
    n: "リソース",
    icon: (
      <>
        <path d="M3 8h10v7H3z" fill="#fff3a8" stroke="#8a5c00" />
        <path d="M12 1v4" stroke="#b22" strokeWidth="2" />
        <path d="M1 8.500L8 2l7 6.500" stroke="#d98a12" strokeWidth="2.200" />
        <path d="M7 10h3v5H7z" fill="#e9b93c" stroke="#8a5c00" strokeWidth="0.700" />
      </>
    ),
  },
  {
    n: "デザインライブラリ",
    icon: (
      <g stroke="#111">
        <path d="M1 7l3-1v9H1z" fill="#2d9c3c" />
        <path d="M5 8l3-2v9H5z" fill="#40b850" />
        <path d="M9 4l3-1v12H9z" fill="#f2c72e" />
        <path d="M12 3l3-1v12l-3 1z" fill="#4c87dd" />
        <path d="M4 5l4 1 3-4" />
      </g>
    ),
  },
  {
    n: "ファイルエクスプローラー",
    icon: (
      <>
        <path d="M1 3h5l1 2h6v9H1z" fill="#edc44a" stroke="#8a6414" />
        <path d="M4 7h11l-2 7H1z" fill="#fff0a4" stroke="#8a6414" />
      </>
    ),
  },
  {
    n: "ビューパレット",
    icon: (
      <>
        <path d="M1 1h14v9H1z" fill="#fff" stroke="#345" />
        <path d="M3 3h4v1H3zM9 3h4v1H9zM3 7h5v1H3zM10 7h3v1h-3z" stroke="#7a8c1c" />
        <path d="M2 13h5M5 11l3 2-3 2" stroke="#1212a8" strokeWidth="1.800" />
      </>
    ),
  },
  { n: "外観", icon: ball },
  { n: "ユーザー定義プロパティ", icon: handPage },
];

export default function App() {
  return (
    <div className="relative flex h-screen w-full overflow-hidden bg-white font-['Liberation_Sans','Noto_Sans_CJK_JP',sans-serif]">
      <div className="flex min-w-0 flex-1 flex-col">
        <TitleBar />
        <Ribbon />
        <TabBar />
        <main className="flex min-h-0 flex-1">
          <FeaturePanel />
          <div className="relative min-w-0 flex-1 overflow-hidden">
            <Model />
            <button
              aria-label="パネルを閉じる"
              className="absolute top-[253px] left-0 flex h-[29px] w-2 flex-col items-center justify-around rounded-r-[4px] border border-l-0 border-[#6c6f85] bg-[#d6d9e6] py-[3px]"
            >
              {[0, 1, 2].map((k) => (
                <svg key={k} viewBox="0 0 3 5" className="h-[5px] w-[3px]" aria-hidden="true">
                  <path d="M3 0v5L0 2.500z" fill="#4d4f86" />
                </svg>
              ))}
            </button>
            <p className="absolute bottom-[3px] left-[10px] text-[12px] leading-4 font-bold whitespace-nowrap text-[#23254c]">
              *不等角投影
            </p>
          </div>
          <div className="flex w-[23px] shrink-0 flex-col pt-10">
            {paneTabs.map((p) => (
              <button
                key={p.n}
                aria-label={p.n}
                className={
                  "flex h-6 items-center justify-center rounded-l-[4px] border border-r-0 border-[#7d8096] " +
                  (p.n === "外観" ? "bg-[#f1f2f7]" : "bg-[#b9bccf]")
                }
              >
                <Icon className="size-[17px]">{p.icon}</Icon>
              </button>
            ))}
          </div>
        </main>
      </div>
      <div className="w-2 shrink-0 border-r border-l border-r-[#25273a] border-l-[#2c5f9c] bg-[#d5d8e8]" />

      <div
        role="menu"
        className="absolute top-0 bottom-0 left-[248px] z-20 flex w-[224px] flex-col overflow-hidden border-x border-[#8e9097] bg-[linear-gradient(90deg,#e1e4e9_30px,#a0a3aa_30px,#a0a3aa_31px,#f2f2f6_31px)] font-['DejaVu_Sans','Noto_Sans_CJK_JP',sans-serif] text-[12px] leading-5 shadow-[2px_0_3px_rgba(0,0,0,0.4)]"
      >
        <div className="h-[15px] shrink-0 bg-[#f2f2f6] pt-[1px] pl-[23px]">
          <svg viewBox="0 0 12 6" className="h-[6px] w-3" aria-hidden="true">
            <path d="M6 0l6 6H0z" fill="#858585" />
          </svg>
        </div>
        <MenuRows entries={viewMenu} />
      </div>
      <div
        role="menu"
        className="absolute top-[86px] left-[466px] z-30 flex w-[243px] flex-col border border-[#7f828b] bg-[linear-gradient(90deg,#e1e4e9_30px,#a0a3aa_30px,#a0a3aa_31px,#f2f2f6_31px)] py-px font-['DejaVu_Sans','Noto_Sans_CJK_JP',sans-serif] text-[12px] leading-5 shadow-[2px_2px_3px_rgba(0,0,0,0.5)]"
      >
        <MenuRows entries={modifyMenu} />
      </div>
      <svg viewBox="0 0 17 26" className="pointer-events-none absolute top-[95px] left-[597px] z-40 h-[26px] w-[17px]" aria-hidden="true">
        <path d="M1.500 1.500v19l4.500-4 3.500 8 3.500-1.500-3.500-7.500h6z" fill="#fff" stroke="#333" />
      </svg>
    </div>
  );
}
